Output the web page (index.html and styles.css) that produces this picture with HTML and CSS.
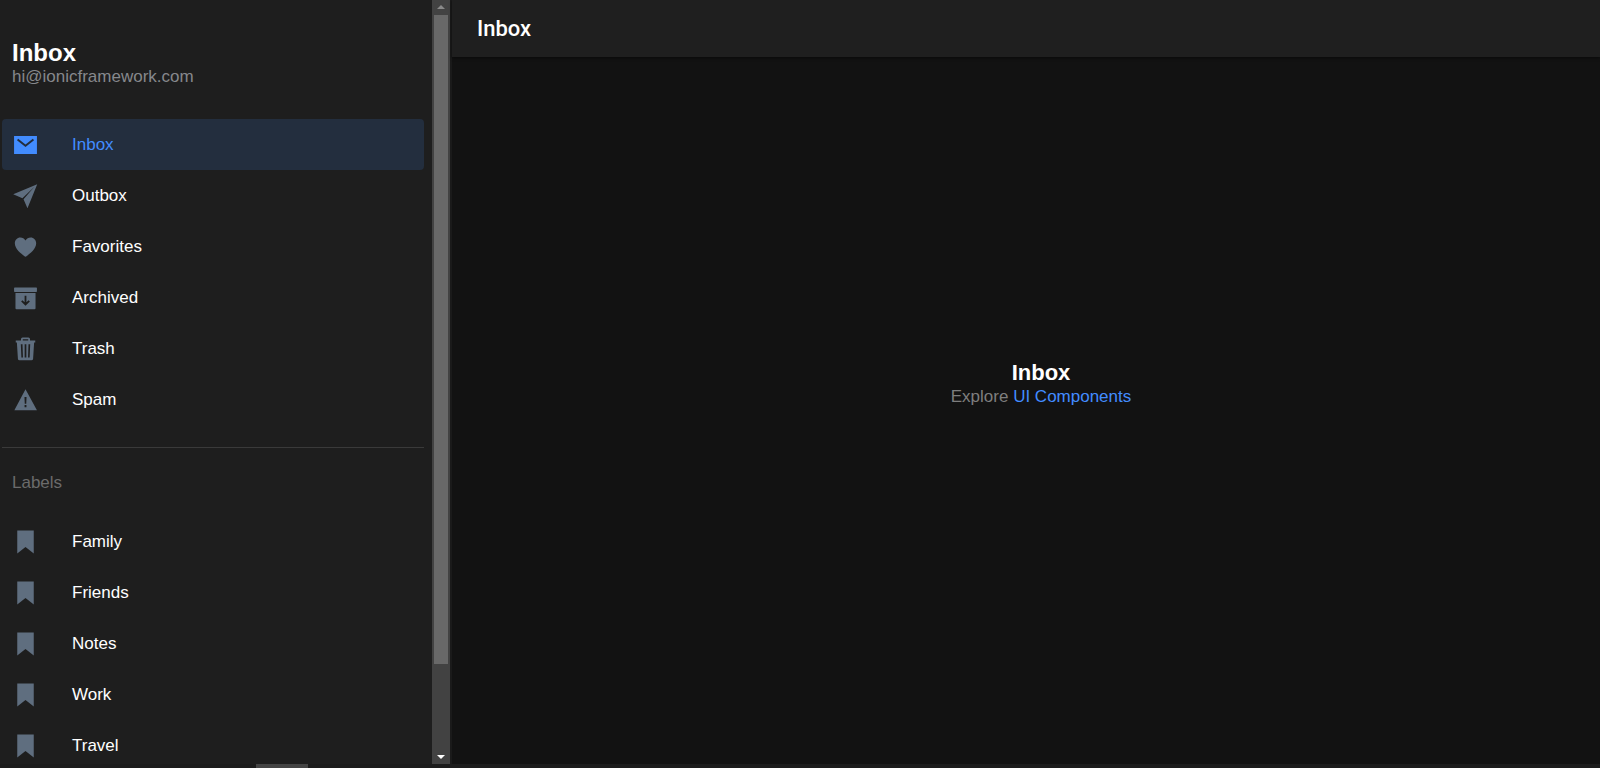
FILE: index.html
```
<!DOCTYPE html>
<html lang="en">
<head>
<meta charset="utf-8">
<meta name="viewport" content="width=device-width, initial-scale=1">
<title>Inbox</title>
<link rel="stylesheet" href="styles.css">
</head>
<body>
<svg class="sprite" aria-hidden="true">
  <symbol id="mail" viewBox="0 0 512 512"><path fill-rule="evenodd" d="M12 66h488v380H12zM100 124l-26 33 182 142 182-142-26-33-156 121z"/></symbol>
  <symbol id="send" viewBox="0 0 512 512"><path d="M506 6L-6 216l196 88L446 56 214 326l84 192z"/></symbol>
  <symbol id="heart" viewBox="0 0 512 512"><path d="M256 466C216 438 28 322 28 178 28 106 80 52 146 52c48 0 84 26 110 66 26-40 62-66 110-66 64 0 118 54 118 126 0 144-188 260-228 288z"/></symbol>
  <symbol id="archive" viewBox="0 0 512 512"><rect x="12" y="34" width="488" height="92" rx="14"/><path fill-rule="evenodd" d="M42 148h428v324q0 22-22 22H64q-22 0-22-22zM237 210v138l-48-46-26 26 93 92 93-92-26-26-48 46V210z"/></symbol>
  <symbol id="trash" viewBox="0 0 512 512"><path fill-rule="evenodd" d="M160 74V44q0-34 34-34h124q34 0 34 34v30h112v42h-24l-22 348q-2 34-36 34H130q-34 0-36-34L72 116H48V74zM198 74h116V46H198zM156 156l12 280h34l-10-280zM238 156v280h36V156zM320 156l-10 280h34l12-280z"/></symbol>
  <symbol id="warning" viewBox="0 0 512 512"><path fill-rule="evenodd" d="M256 26L18 472h482zM234 190l6 144h32l6-144zM236 364v48h40v-48z"/></symbol>
  <symbol id="bookmark" viewBox="0 0 512 512"><path d="M80 10h352v492L256 362 80 502z"/></symbol>
</svg>
<div class="app">
  <div class="split">
    <aside class="sidebar">
      <div class="menu">
        <header class="menu-head">
          <h1 class="menu-title">Inbox</h1>
          <p class="menu-note">hi@ionicframework.com</p>
        </header>
        <nav class="list">
          <a class="item active" href="#inbox"><svg class="icon"><use href="#mail"/></svg>Inbox</a>
          <a class="item" href="#outbox"><svg class="icon"><use href="#send"/></svg>Outbox</a>
          <a class="item" href="#favorites"><svg class="icon"><use href="#heart"/></svg>Favorites</a>
          <a class="item" href="#archived"><svg class="icon"><use href="#archive"/></svg>Archived</a>
          <a class="item" href="#trash-box"><svg class="icon"><use href="#trash"/></svg>Trash</a>
          <a class="item" href="#spam"><svg class="icon"><use href="#warning"/></svg>Spam</a>
        </nav>
        <section class="labels">
          <h2 class="labels-title">Labels</h2>
          <nav class="list">
            <a class="item" href="#family"><svg class="icon"><use href="#bookmark"/></svg>Family</a>
            <a class="item" href="#friends"><svg class="icon"><use href="#bookmark"/></svg>Friends</a>
            <a class="item" href="#notes"><svg class="icon"><use href="#bookmark"/></svg>Notes</a>
            <a class="item" href="#work"><svg class="icon"><use href="#bookmark"/></svg>Work</a>
            <a class="item" href="#travel"><svg class="icon"><use href="#bookmark"/></svg>Travel</a>
          </nav>
        </section>
      </div>
      <div class="scrollbar" aria-hidden="true">
        <svg class="arrow up" viewBox="0 0 8 4"><path d="M0 4L4 0l4 4z"/></svg>
        <div class="track"><div class="thumb"></div></div>
        <svg class="arrow" viewBox="0 0 8 4"><path d="M0 0h8L4 4z"/></svg>
      </div>
    </aside>
    <main class="page">
      <header class="toolbar"><h2 class="toolbar-title">Inbox</h2></header>
      <div class="content">
        <strong class="content-title">Inbox</strong>
        <p class="content-text">Explore <a class="link" href="#components">UI Components</a></p>
      </div>
    </main>
  </div>
  <div class="bottom" aria-hidden="true"><div class="handle"></div></div>
</div>
</body>
</html>
```
FILE: styles.css
```
* { box-sizing: border-box; }
body {
  margin: 0;
  background: #121212;
  color: #fff;
  font: 17px/24px "Liberation Sans", Arial, sans-serif;
}
h1, h2, p { margin: 0; }
a { text-decoration: none; }
.sprite { display: none; }
.app { display: flex; flex-direction: column; height: 100vh; overflow: hidden; }
.split { display: flex; flex: 1; min-height: 0; }
.sidebar {
  display: flex;
  flex: 0 0 452px;
  background: #1e1e1e;
  border-right: 2px solid #1a1a1a;
}
.menu { flex: 1; min-width: 0; padding: 40px 8px 0 2px; overflow: hidden; }
.menu-head { padding: 0 10px; margin-bottom: 32px; }
.menu-title { font-size: 24px; line-height: 26px; font-weight: 700; }
.menu-note { line-height: 21px; color: #86888c; }
.list { display: flex; flex-direction: column; }
.item {
  display: flex;
  align-items: center;
  gap: 34px;
  height: 51px;
  padding: 0 11px;
  border-radius: 4px;
  color: #fff;
}
.icon { width: 25px; height: 24px; fill: #5f6e7f; flex: none; overflow: visible; }
.active { background: #232e3e; color: #428cff; }
.active .icon { fill: #428cff; }
.labels { margin-top: 22px; padding-top: 18px; border-top: 1px solid #3a3a3a; }
.labels-title { padding: 0 10px; margin-bottom: 16px; font-size: 17px; line-height: 34px; font-weight: 400; color: #6b6b6b; }
.scrollbar {
  display: flex;
  flex-direction: column;
  align-items: center;
  width: 18px;
  padding: 5px 0;
  background: #424242;
}
.arrow { width: 8px; height: 4px; fill: #fff; flex: none; }
.up { fill: #8a8a8a; }
.track { flex: 1; width: 14px; padding: 6px 0 2px; }
.thumb { height: 88%; background: #686868; }
.page { display: flex; flex: 1; flex-direction: column; min-width: 0; }
.toolbar {
  padding: 0 25px;
  background: #1f1f1f;
  box-shadow: 0 1px 3px rgba(0, 0, 0, 0.5);
}
.toolbar-title { font: 500 22px/57px Roboto, sans-serif; }
.content { display: flex; flex: 1; flex-direction: column; align-items: center; justify-content: center; padding: 0 0 54px 30px; }
.content-title { font-size: 22px; line-height: 26px; }
.content-text { line-height: 22px; color: #7e7e7e; }
.link { color: #428cff; }
.bottom { height: 4px; padding-left: 16%; background: #1c1c1c; }
.handle { width: 52px; height: 4px; background: #444; }
```
